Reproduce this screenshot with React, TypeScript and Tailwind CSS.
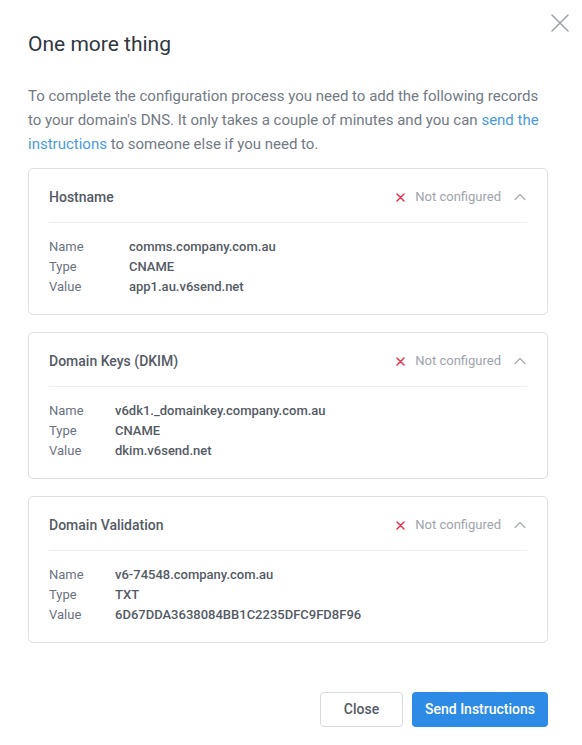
import React from "react";

type Record = {
  title: string;
  cols: string;
  rows: [string, string][];
};

const records: Record[] = [
  {
    title: "Hostname",
    cols: "grid-cols-[80px_1fr]",
    rows: [
      ["Name", "comms.company.com.au"],
      ["Type", "CNAME"],
      ["Value", "app1.au.v6send.net"],
    ],
  },
  {
    title: "Domain Keys (DKIM)",
    cols: "grid-cols-[66px_1fr]",
    rows: [
      ["Name", "v6dk1._domainkey.company.com.au"],
      ["Type", "CNAME"],
      ["Value", "dkim.v6send.net"],
    ],
  },
  {
    title: "Domain Validation",
    cols: "grid-cols-[66px_1fr]",
    rows: [
      ["Name", "v6-74548.company.com.au"],
      ["Type", "TXT"],
      ["Value", "6D67DDA3638084BB1C2235DFC9FD8F96"],
    ],
  },
];

function Cross({ size, className, stroke }: { size: number; className?: string; stroke: number }) {
  return (
    <svg width={size} height={size} viewBox={`0 0 ${size} ${size}`} className={className} fill="none">
      <path
        d={`M1 1L${size - 1} ${size - 1}M${size - 1} 1L1 ${size - 1}`}
        stroke="currentColor"
        strokeWidth={stroke}
        strokeLinecap="round"
      />
    </svg>
  );
}

function RecordCard({ r }: { r: Record }) {
  return (
    <div className="rounded-[5px] border border-[#dcdfe3] px-5 pt-[18px] pb-[17px]">
      <div className="flex items-center justify-between pb-[15px] border-b border-[#eceef0]">
        <div className="text-[14px] leading-5 font-medium text-[#545b64]">{r.title}</div>
        <div className="flex items-center">
          <Cross size={9} stroke={1.5} className="text-[#e8354f]" />
          <span className="ml-[10px] text-[13px] leading-5 text-[#9ea4ab]">Not configured</span>
          <svg width="12" height="8" viewBox="0 0 12 8" className="ml-[13px] mr-[1px] text-[#a4aab0]" fill="none">
            <path d="M1 6.5L6 1.5L11 6.5" stroke="currentColor" strokeWidth="1.2" strokeLinecap="round" strokeLinejoin="round" />
          </svg>
        </div>
      </div>
      <div className={`grid ${r.cols} pt-[14px] text-[13px] leading-5`}>
        {r.rows.map(([k, v]) => (
          <React.Fragment key={k}>
            <div className="text-[#6b7280]">{k}</div>
            <div className="font-medium text-[#545b64]">{v}</div>
          </React.Fragment>
        ))}
      </div>
    </div>
  );
}

export default function App() {
  return (
    <div
      className="relative w-[582px] h-[745px] bg-white pl-7 pr-[34px] pt-[28px] pb-[18px] flex flex-col"
      style={{ fontFamily: "Roboto, 'Noto Sans', sans-serif" }}
    >
      <button className="absolute right-[13px] top-[14px] text-[#9aa1a8]" aria-label="Close">
        <Cross size={18} stroke={1.5} />
      </button>

      <h1 className="text-[21px] leading-[32px] text-[#2f3740]">One more thing</h1>

      <p className="mt-[24px] text-[15px] leading-6 text-[#727a83]">
        To complete the configuration process you need to add the following records to your
        domain's DNS. It only takes a couple of minutes and you can{" "}
        <a className="text-[#4a9ae6]">send the instructions</a> to someone else if you need to.
      </p>

      <div className="mt-[12px] flex flex-col gap-[17px]">
        {records.map((r) => (
          <RecordCard key={r.title} r={r} />
        ))}
      </div>

      <div className="mt-auto flex justify-end gap-[9px]">
        <button className="h-[35px] w-[83px] rounded-[4px] border border-[#d6d9dd] text-[14px] font-medium text-[#545b64]">
          Close
        </button>
        <button className="h-[35px] w-[136px] rounded-[4px] bg-[#2d8be6] text-[14px] font-medium text-white">
          Send Instructions
        </button>
      </div>
    </div>
  );
}
